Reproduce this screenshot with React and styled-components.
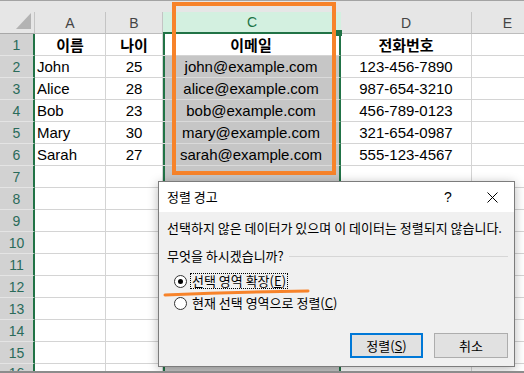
import React from "react";
import styled, { createGlobalStyle, css } from "styled-components";

const GREEN = "#217346";
const ORANGE = "#f7832a";

const GlobalStyle = createGlobalStyle`
  html, body {
    margin: 0;
    padding: 0;
    background: #ffffff;
  }
  body {
    font-family: "Liberation Sans", "Noto Sans CJK KR", sans-serif;
  }
`;

const Frame = styled.div`
  position: relative;
  width: 524px;
  height: 373px;
  overflow: hidden;
  background: #ffffff;
  box-sizing: border-box;
  border-bottom: 2px solid #8c8c8c;
`;

const TopBand = styled.div`
  height: 12px;
  box-sizing: border-box;
  background: #e6e6e6;
  border-top: 1px solid #a3a3a3;
`;

const Sheet = styled.div`
  display: grid;
  grid-template-columns: 35px 71px 57px 178px 131px 72px;
  grid-template-rows: 22px;
  grid-auto-rows: 22px;
  width: 544px;
`;

const Corner = styled.div`
  position: relative;
  background: #e6e6e6;
  box-sizing: border-box;
  border-right: 1px solid #c4c4c4;
  border-bottom: 1px solid #a8a8a8;

  &::after {
    content: "";
    position: absolute;
    right: 3px;
    bottom: 4px;
    width: 15px;
    height: 16px;
    background: #b3b3b3;
    clip-path: polygon(100% 0, 100% 100%, 0 100%);
  }
`;

const ColHead = styled.div`
  position: relative;
  display: flex;
  align-items: center;
  justify-content: center;
  box-sizing: border-box;
  background: #e6e6e6;
  border-right: 1px solid #c4c4c4;
  border-bottom: 1px solid #bdbdbd;
  color: #444444;
  font-size: 14px;

  ${(p) =>
    p.$selected &&
    css`
      background: #d3f0e0;
      color: ${GREEN};
      border-right: none;
      border-bottom: 2px solid ${GREEN};

      &::after {
        content: "";
        position: absolute;
        right: -1px;
        bottom: -4px;
        width: 6px;
        height: 6px;
        background: ${GREEN};
        z-index: 2;
      }
    `}
`;

const RowHead = styled.div`
  display: flex;
  align-items: ${(p) => (p.$cut ? "flex-start" : "center")};
  padding-top: ${(p) => (p.$cut ? "1px" : "0")};
  justify-content: center;
  box-sizing: border-box;
  background: #d2d2d2;
  border-right: 2px solid ${GREEN};
  border-bottom: 1px solid #e4e4e4;
  color: #2a6b5a;
  font-size: 14px;
`;

const Cell = styled.div`
  display: flex;
  align-items: center;
  justify-content: ${(p) => (p.$left ? "flex-start" : "center")};
  box-sizing: border-box;
  padding: 0 2px;
  background: #ffffff;
  border-right: 1px solid #d4d4d4;
  border-bottom: 1px solid #d4d4d4;
  color: #000000;
  font-size: 15px;
  font-weight: ${(p) => (p.$bold ? 700 : 400)};
  white-space: nowrap;
  overflow: hidden;

  ${(p) =>
    p.$col &&
    css`
      border-right: 2px solid ${GREEN};
      box-shadow: inset 2px 0 0 ${GREEN};
      background: ${p.$active ? "#ffffff" : "#c6c6c6"};
      border-bottom-color: ${p.$active ? "#d4d4d4" : "#dadada"};
    `}
`;

const Highlight = styled.div`
  position: absolute;
  left: 172px;
  top: 2px;
  width: 164px;
  height: 173px;
  box-sizing: border-box;
  border: 4px solid ${ORANGE};
  pointer-events: none;
`;

const Scribble = styled.svg`
  position: absolute;
  left: 0;
  top: 0;
  pointer-events: none;
`;

/* dialog */

const Dialog = styled.div`
  position: absolute;
  left: 158px;
  top: 181px;
  width: 357px;
  height: 186px;
  box-sizing: border-box;
  display: flex;
  flex-direction: column;
  background: #f0f0f0;
  border: 1px solid #7c7c7c;
  box-shadow: 0 2px 10px rgba(0, 0, 0, 0.28);
  font-family: "Noto Sans CJK KR", "Liberation Sans", sans-serif;
  font-size: 13px;
  color: #000000;
`;

const TitleBar = styled.div`
  display: flex;
  align-items: center;
  height: 30px;
  background: #ffffff;
  padding-left: 8px;
`;

const Title = styled.span`
  flex: 1;
  line-height: 16px;
`;

const TitleButton = styled.div`
  width: 44px;
  height: 30px;
  display: flex;
  align-items: center;
  justify-content: center;
  font-family: "Liberation Sans", sans-serif;
  font-size: 14px;
`;

const Body = styled.div`
  flex: 1;
  display: flex;
  flex-direction: column;
  padding: 8px 6px 8px 8px;
`;

const Message = styled.div`
  line-height: 16px;
  white-space: nowrap;
`;

const GroupLabel = styled.div`
  display: flex;
  align-items: center;
  gap: 5px;
  margin-top: 12px;
  line-height: 16px;

  &::after {
    content: "";
    flex: 1;
    height: 1px;
    background: #d6d6d6;
  }
`;

const Option = styled.label`
  display: flex;
  align-items: center;
  height: 16px;
  margin-left: 7px;
  margin-top: ${(p) => p.$gap}px;
`;

const Radio = styled.span`
  width: 13px;
  height: 13px;
  box-sizing: border-box;
  border-radius: 50%;
  border: 1px solid #333333;
  background: #ffffff;
  display: flex;
  align-items: center;
  justify-content: center;

  &::after {
    content: "";
    width: 5px;
    height: 5px;
    border-radius: 50%;
    background: ${(p) => (p.$checked ? "#000000" : "transparent")};
  }
`;

const OptionText = styled.span`
  margin-left: 3px;
  padding: 0 1px;
  line-height: 14px;
  border: 1px ${(p) => (p.$focused ? "dotted #000000" : "solid transparent")};
`;

const Key = styled.u`
  text-decoration: underline;
`;

const Buttons = styled.div`
  margin-top: auto;
  display: flex;
  justify-content: flex-end;
  gap: 11px;
`;

const Button = styled.div`
  width: ${(p) => p.$width}px;
  height: 25px;
  box-sizing: border-box;
  display: flex;
  align-items: center;
  justify-content: center;
  background: #e1e1e1;
  border: ${(p) => (p.$primary ? "2px solid #0078d7" : "1px solid #adadad")};
`;

const columns = ["A", "B", "C", "D", "E"];

const rows = [
  ["이름", "나이", "이메일", "전화번호"],
  ["John", "25", "john@example.com", "123-456-7890"],
  ["Alice", "28", "alice@example.com", "987-654-3210"],
  ["Bob", "23", "bob@example.com", "456-789-0123"],
  ["Mary", "30", "mary@example.com", "321-654-0987"],
  ["Sarah", "27", "sarah@example.com", "555-123-4567"],
];

const TOTAL_ROWS = 16;

function CloseIcon() {
  return (
    <svg width="11" height="11" viewBox="0 0 11 11">
      <path d="M0.5 0.5 L10.5 10.5 M10.5 0.5 L0.5 10.5" stroke="#000" strokeWidth="1" />
    </svg>
  );
}

export default function App() {
  const body = [];
  for (let r = 0; r < TOTAL_ROWS; r++) {
    const data = rows[r] || ["", "", "", ""];
    body.push(
      <RowHead key={`h${r}`} $cut={r === TOTAL_ROWS - 1}>
        {r + 1}
      </RowHead>
    );
    data.forEach((value, c) => {
      body.push(
        <Cell
          key={`${r}-${c}`}
          $left={c === 0 && r > 0}
          $bold={r === 0}
          $col={c === 2}
          $active={c === 2 && r === 0}
        >
          {value}
        </Cell>
      );
    });
    body.push(<Cell key={`${r}-e`} />);
  }

  return (
    <>
      <GlobalStyle />
      <Frame>
        <TopBand />
        <Sheet>
          <Corner />
          {columns.map((c) => (
            <ColHead key={c} $selected={c === "C"}>
              {c}
            </ColHead>
          ))}
          {body}
        </Sheet>

        <Highlight />

        <Dialog>
          <TitleBar>
            <Title>정렬 경고</Title>
            <TitleButton>?</TitleButton>
            <TitleButton>
              <CloseIcon />
            </TitleButton>
          </TitleBar>
          <Body>
            <Message>선택하지 않은 데이터가 있으며 이 데이터는 정렬되지 않습니다.</Message>
            <GroupLabel>무엇을 하시겠습니까?</GroupLabel>
            <Option $gap={9}>
              <Radio $checked />
              <OptionText $focused>
                선택 영역 확장(<Key>E</Key>)
              </OptionText>
            </Option>
            <Option $gap={6}>
              <Radio />
              <OptionText>
                현재 선택 영역으로 정렬(<Key>C</Key>)
              </OptionText>
            </Option>
            <Buttons>
              <Button $primary $width={73}>
                정렬(<Key>S</Key>)
              </Button>
              <Button $width={74}>취소</Button>
            </Buttons>
          </Body>
        </Dialog>

        <Scribble width="524" height="373" viewBox="0 0 524 373">
          <path
            d="M165 295 Q 235 292 308 291"
            fill="none"
            stroke={ORANGE}
            strokeWidth="3"
            strokeLinecap="round"
          />
        </Scribble>
      </Frame>
    </>
  );
}
